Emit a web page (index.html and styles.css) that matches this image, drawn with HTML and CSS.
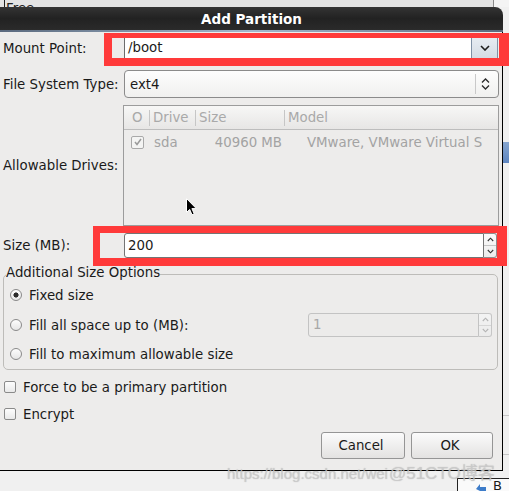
FILE: index.html
```html
<!DOCTYPE html>
<html>
<head>
<meta charset="utf-8">
<title>Add Partition</title>
<link rel="stylesheet" href="styles.css">
</head>
<body>
<div class="screen">
  <div class="top">
    <div class="top-pane"><div class="free">Free</div></div>
  </div>

  <div class="dialog">
    <div class="titlebar">Add Partition</div>
    <div class="dbody">
      <div class="row row-mount">
        <div class="label">Mount Point:</div>
        <div class="combo-entry">
          <div class="entry">/boot</div>
          <div class="drop-btn">
            <svg width="10" height="6" viewBox="0 0 10 6"><polyline points="1,1 5,5 9,1" fill="none" stroke="#1d1d1d" stroke-width="1.6"/></svg>
          </div>
        </div>
      </div>

      <div class="row row-fs">
        <div class="label">File System Type:</div>
        <div class="combo">
          <span class="combo-text">ext4</span>
          <span class="combo-sep"></span>
          <span class="combo-arrows">
            <svg width="9" height="12" viewBox="0 0 9 12"><polyline points="1,4.5 4.5,1 8,4.5" fill="none" stroke="#2a2a2a" stroke-width="1.3"/><polyline points="1,7.5 4.5,11 8,7.5" fill="none" stroke="#2a2a2a" stroke-width="1.3"/></svg>
          </span>
        </div>
      </div>

      <div class="row row-drives">
        <div class="label">Allowable Drives:</div>
        <div class="tree">
          <div class="tree-head">
            <div class="th th-check">O</div>
            <div class="th th-sep">Drive</div>
            <div class="th th-sep">Size</div>
            <div class="th th-sep">Model</div>
          </div>
          <div class="tree-row">
            <div class="td td-check">
              <span class="tchk"><svg width="10" height="10" viewBox="0 0 10 10"><polyline points="2,5 4,7.5 8,2" fill="none" stroke="#9a9a9a" stroke-width="1.5"/></svg></span>
            </div>
            <div class="td td-drive">sda</div>
            <div class="td td-size">40960 MB</div>
            <div class="td td-model">VMware, VMware Virtual S</div>
          </div>
        </div>
      </div>

      <div class="row row-size">
        <div class="label">Size (MB):</div>
        <div class="spin spin-size">
          <div class="spin-entry">200</div>
          <div class="spin-btns">
            <span class="sb"><svg width="7" height="5" viewBox="0 0 7 5"><polyline points="0.8,4 3.5,1.2 6.2,4" fill="none" stroke="#333" stroke-width="1.1"/></svg></span>
            <span class="sb"><svg width="7" height="5" viewBox="0 0 7 5"><polyline points="0.8,1 3.5,3.8 6.2,1" fill="none" stroke="#333" stroke-width="1.1"/></svg></span>
          </div>
        </div>
      </div>

      <fieldset class="frame">
        <legend>Additional Size Options</legend>
        <div class="opt"><span class="radio on"></span>Fixed size</div>
        <div class="opt opt-fill"><span class="radio"></span>Fill all space up to (MB):
          <div class="spin spin-dis">
            <div class="spin-entry">1</div>
            <div class="spin-btns">
              <span class="sb"><svg width="7" height="5" viewBox="0 0 7 5"><polyline points="0.8,4 3.5,1.2 6.2,4" fill="none" stroke="#b4b4b4" stroke-width="1.1"/></svg></span>
              <span class="sb"><svg width="7" height="5" viewBox="0 0 7 5"><polyline points="0.8,1 3.5,3.8 6.2,1" fill="none" stroke="#b4b4b4" stroke-width="1.1"/></svg></span>
            </div>
          </div>
        </div>
        <div class="opt opt-max"><span class="radio"></span>Fill to maximum allowable size</div>
      </fieldset>

      <div class="check-row"><span class="chk"></span>Force to be a primary partition</div>
      <div class="check-row"><span class="chk"></span>Encrypt</div>

      <div class="buttons">
        <button class="btn btn-cancel">Cancel</button>
        <button class="btn btn-ok">OK</button>
      </div>
    </div>
  </div>

  <div class="side">
    <div class="side-blue"></div>
    <div class="side-lines"></div>
  </div>

  <div class="below">
    <div class="task">
      <svg width="12" height="8" viewBox="0 0 12 8"><path d="M1 6 L5 1 L5 4 L11 4 L11 8 L5 8 L5 8 Z" fill="#3d7cc9"/></svg>
      <span class="task-text">B</span>
    </div>
  </div>

  <div class="watermark">https://blog.csdn.net/wei<span class="wm-big">@51CTO博客</span></div>

  <div class="mark mark-mount"></div>
  <div class="mark mark-size"></div>

  <svg class="cursor" width="12" height="18" viewBox="0 0 12 18"><path d="M0.5 0.5 L0.5 14.5 L3.7 11.4 L6 16.8 L8.2 15.8 L5.9 10.6 L10.3 10.6 Z" fill="#000" stroke="#fff" stroke-width="1"/></svg>
</div>
</body>
</html>
```

FILE: styles.css
```css
* { box-sizing: border-box; }
html, body { margin: 0; padding: 0; }
body {
  width: 509px; height: 491px; overflow: hidden;
  background: #f1f1f1;
  font-family: "DejaVu Sans", "Noto Sans", sans-serif;
  font-size: 13.33px;
  color: #1a1a1a;
}
.screen {
  position: relative;
  width: 509px; height: 491px;
  display: grid;
  grid-template-columns: 503px 6px;
  grid-template-rows: 7px 464px 20px;
  overflow: hidden;
}

/* background window strip above */
.top { grid-column: 1 / 3; display: flex; background: #f4f4f4; }
.top-pane { width: 494px; background: #e3e3e3; border-right: 1px solid #8a8a8a; overflow: hidden; }
.free { margin-left: 4px; border-left: 1px solid #222; height: 7px; padding: 2px 0 0 1px; line-height: 13px; color: #222; }

/* dialog */
.dialog { display: flex; flex-direction: column; min-height: 0; }
.titlebar {
  flex: none; height: 25px;
  border-top-right-radius: 8px;
  background:
    linear-gradient(to right, #5b6a7e, #a3b6cc 50%, #5b6a7e) bottom / 100% 2px no-repeat,
    linear-gradient(#343434, #222 45%, #2c2c2c);
  color: #fff; font-weight: bold; font-size: 13.5px;
  text-align: center; line-height: 23px; padding-top: 1px;
}
.dbody {
  flex: 1; min-height: 0;
  background: #edeceb;
  border-right: 1px solid #000; border-bottom: 1px solid #000;
  padding: 4px 3px 0 3px;
  display: flex; flex-direction: column;
}
.row { display: grid; grid-template-columns: 121px 1fr; align-items: center; flex: none; }
.label { white-space: nowrap; }

/* mount point combo entry */
.combo-entry { height: 24px; display: flex; margin-right: 1px; }
.entry { flex: 1; background: #fff; border: 1px solid #6c6c6c; border-right: none; padding-left: 3px; line-height: 22px; }
.drop-btn {
  width: 27px; display: flex; align-items: center; justify-content: center;
  background: linear-gradient(#e7ecf2, #d4dbe4);
  border: 1px solid #7f90a5;
}

/* file system combo */
.row-fs { margin-top: 10px; }
.combo {
  height: 28px; display: flex; align-items: center;
  border: 1px solid #8b8b8b; border-radius: 4px;
  background: linear-gradient(#fdfdfd, #f0f0ef);
  padding-left: 5px;
}
.combo-text { flex: 1; }
.combo-sep { width: 1px; height: 20px; background: #c9c9c9; }
.combo-arrows { width: 22px; display: flex; padding-left: 5px; }

/* tree view */
.row-drives { margin-top: 7px; }
.tree { height: 121px; margin-left: -1px; border: 1px solid #9c9c9c; background: #edeceb; overflow: hidden; }
.tree-head, .tree-row { display: grid; grid-template-columns: 25px 46px 89px 1fr; }
.tree-head { height: 24px; background: linear-gradient(#f7f7f6, #e7e6e5); border-bottom: 1px solid #bdbdbd; color: #a9a9a9; }
.th { line-height: 23px; white-space: nowrap; }
.th-check { padding-left: 8px; }
.th-sep { padding-left: 4px; background: linear-gradient(#c6c6c6, #c6c6c6) left center / 1px 16px no-repeat; }
.tree-row { height: 24px; align-items: center; color: #a3a3a3; }
.td { white-space: nowrap; overflow: hidden; }
.td-check { padding-left: 7px; display: flex; }
.tchk { width: 13px; height: 13px; border: 1px solid #a9a9a9; border-radius: 2px; background: #f4f4f3; display: flex; align-items: center; justify-content: center; }
.td-drive { padding-left: 5px; }
.td-size { text-align: right; padding-right: 2px; }
.td-model { padding-left: 23px; }

/* spin buttons */
.row-size { margin-top: 7px; }
.spin { display: flex; height: 25px; }
.spin-size { margin-right: 2px; }
.spin-entry { flex: 1; background: #fff; border: 1px solid #747474; border-radius: 3px 0 0 3px; padding-left: 3px; line-height: 23px; }
.spin-btns { width: 13px; display: flex; flex-direction: column; border: 1px solid #8d8d8d; border-left: none; border-radius: 0 3px 3px 0; background: linear-gradient(#fbfbfb, #ececec); }
.sb { flex: 1; display: flex; align-items: center; justify-content: center; }
.sb + .sb { border-top: 1px solid #c4c4c4; }

/* frame */
.frame {
  flex: none;
  margin: 7px 1px 0 0; min-width: 0;
  border: 1px solid #bdbcb9; border-radius: 5px;
  padding: 0 5px 3px 6px;
}
.frame legend { padding: 0 0 3px 0; margin-left: -4px; line-height: 15px; }
.opt { display: flex; align-items: center; height: 24px; white-space: nowrap; }
.opt-fill { margin-top: 6px; }
.opt-max { margin-top: 5px; }
.radio {
  flex: none; width: 12px; height: 12px; border-radius: 50%;
  border: 1px solid #8a8a8a; margin-right: 7px;
  background: linear-gradient(#fdfdfd, #e6e6e6);
}
.radio.on { background: radial-gradient(circle, #2a2a2a 0 2.3px, transparent 2.8px), linear-gradient(#fdfdfd, #e6e6e6); }
.spin-dis { margin-left: auto; width: 184px; height: 24px; }
.spin-dis .spin-entry { background: #ecebea; border-color: #c3c3c3; color: #a8a8a8; padding-left: 4px; line-height: 22px; }
.spin-dis .spin-btns { border-color: #c6c6c6; background: linear-gradient(#f3f3f3, #ebebeb); }
.spin-dis .sb + .sb { border-top-color: #d6d6d6; }

/* checkboxes */
.check-row { flex: none; display: flex; align-items: center; height: 20px; margin-top: 7px; padding-left: 1px; }
.check-row + .check-row { margin-top: 7px; }
.chk { flex: none; width: 12px; height: 12px; border: 1px solid #8a8a8a; border-radius: 2px; background: linear-gradient(#fdfdfd, #e9e9e9); margin-right: 7px; }

/* buttons */
.buttons { flex: none; display: flex; justify-content: flex-end; gap: 6px; margin-top: 8px; padding-right: 6px; }
.btn {
  height: 27px; padding: 0 4px 0 0;
  font: inherit; color: #1a1a1a;
  border: 1px solid #959595; border-radius: 3px;
  background: linear-gradient(#fbfbfb, #e3e2e1);
}
.btn-cancel { width: 84px; }
.btn-ok { width: 82px; }

/* right strip of background app */
.side { background: #f0f0f0; display: flex; flex-direction: column; }
.side-blue { height: 21px; margin-top: 135px; background: linear-gradient(#86a5cf, #5d85c0); }
.side-lines { height: 40px; margin-top: 252px; border-top: 1px solid #c6c6c6; border-bottom: 1px solid #c6c6c6; }

/* area below */
.below { grid-column: 1 / 3; background: #f0f0f0; display: flex; justify-content: flex-end; align-items: flex-end; }
.task { width: 52px; height: 13px; border-top: 1px solid #222; border-left: 1px solid #222; background: #fafafa; display: flex; align-items: flex-end; padding-left: 17px; gap: 6px; overflow: hidden; }
.task-text { font-size: 13px; line-height: 10px; height: 10px; }

/* overlays */
.watermark {
  position: absolute; left: 227px; top: 465px;
  display: flex; align-items: baseline;
  font-family: "Liberation Sans", "Noto Sans CJK SC", sans-serif;
  font-size: 15px; line-height: 17px;
  color: rgba(205, 205, 205, 0.75);
  text-shadow: 0 0 1px rgba(150, 150, 150, 0.6);
  white-space: nowrap;
}
.wm-big { font-size: 17px; margin-left: 1px; }
.mark { position: absolute; border-style: solid; border-color: #ff3a3a; }
.mark-mount { left: 104px; top: 33px; width: 405px; height: 33px; border-width: 5px 10px 8px 8px; }
.mark-size { left: 93px; top: 226px; width: 414px; height: 40px; border-width: 7px 10px 8px 7px; }
.cursor { position: absolute; left: 186px; top: 198px; }
```
